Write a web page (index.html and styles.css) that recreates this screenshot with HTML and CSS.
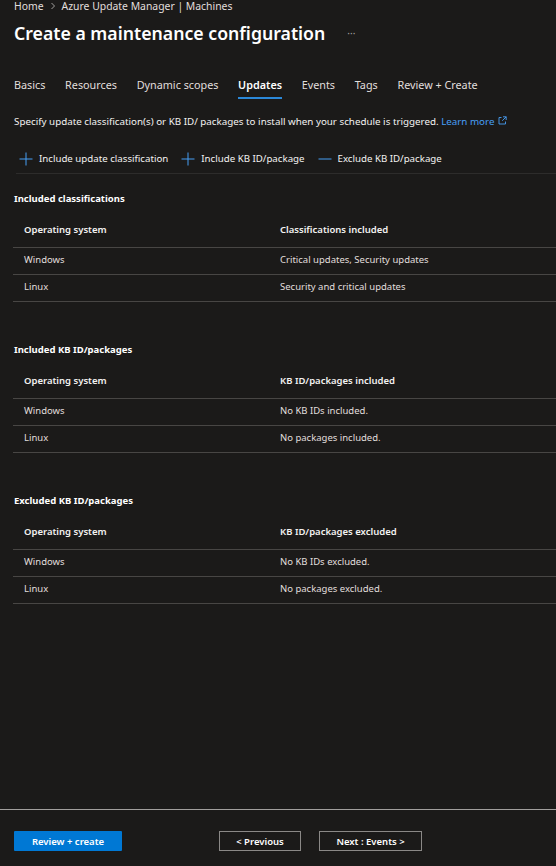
FILE: index.html
```html
<!DOCTYPE html>
<html lang="en">
<head>
<meta charset="utf-8">
<title>Create a maintenance configuration</title>
<link rel="stylesheet" href="styles.css">
</head>
<body>
<div class="page">
  <main class="content">
    <nav class="breadcrumb">
      <span>Home</span>
      <svg class="chev" width="6" height="8" viewBox="0 0 6 8"><path d="M1.5 1 L4.5 4 L1.5 7" fill="none" stroke="#a19f9d" stroke-width="1"/></svg>
      <span>Azure Update Manager | Machines</span>
    </nav>
    <div class="title-row">
      <h1 class="title">Create a maintenance configuration</h1>
      <span class="more">&middot;&middot;&middot;</span>
    </div>

    <div class="tabs">
      <span class="tab">Basics</span>
      <span class="tab">Resources</span>
      <span class="tab">Dynamic scopes</span>
      <span class="tab active">Updates</span>
      <span class="tab">Events</span>
      <span class="tab">Tags</span>
      <span class="tab">Review + Create</span>
    </div>

    <p class="desc">Specify update classification(s) or KB ID/ packages to install when your schedule is triggered. <a class="link">Learn more <svg class="ext" width="9" height="9" viewBox="0 0 9 9"><path d="M3.5 1.5 H1 V8 H7.5 V5.5" fill="none" stroke="#479ef5" stroke-width="0.9"/><path d="M5 0.8 H8.2 V4 M8.2 0.8 L4.2 4.8" fill="none" stroke="#479ef5" stroke-width="0.9"/></svg></a></p>

    <div class="toolbar">
      <span class="tool"><svg class="ticon" width="14" height="14" viewBox="0 0 14 14"><path d="M7 0.5 V13.5 M0.5 7 H13.5" stroke="#479ef5" stroke-width="1"/></svg>Include update classification</span>
      <span class="tool"><svg class="ticon" width="14" height="14" viewBox="0 0 14 14"><path d="M7 0.5 V13.5 M0.5 7 H13.5" stroke="#479ef5" stroke-width="1"/></svg>Include KB ID/package</span>
      <span class="tool"><svg class="ticon" width="14" height="14" viewBox="0 0 14 14"><path d="M0.5 7 H13.5" stroke="#479ef5" stroke-width="1"/></svg>Exclude KB ID/package</span>
    </div>

    <section class="section first">
      <h2 class="heading">Included classifications</h2>
      <div class="table">
        <div class="row head"><span>Operating system</span><span>Classifications included</span></div>
        <div class="row"><span>Windows</span><span>Critical updates, Security updates</span></div>
        <div class="row"><span>Linux</span><span>Security and critical updates</span></div>
      </div>
    </section>

    <section class="section">
      <h2 class="heading">Included KB ID/packages</h2>
      <div class="table">
        <div class="row head"><span>Operating system</span><span>KB ID/packages included</span></div>
        <div class="row"><span>Windows</span><span>No KB IDs included.</span></div>
        <div class="row"><span>Linux</span><span>No packages included.</span></div>
      </div>
    </section>

    <section class="section">
      <h2 class="heading">Excluded KB ID/packages</h2>
      <div class="table">
        <div class="row head"><span>Operating system</span><span>KB ID/packages excluded</span></div>
        <div class="row"><span>Windows</span><span>No KB IDs excluded.</span></div>
        <div class="row"><span>Linux</span><span>No packages excluded.</span></div>
      </div>
    </section>
  </main>

  <footer class="footer">
    <button class="btn primary">Review + create</button>
    <button class="btn outline prev">&lt; Previous</button>
    <button class="btn outline next">Next : Events &gt;</button>
  </footer>
</div>
</body>
</html>
```

FILE: styles.css
```css
* { box-sizing: border-box; }

html, body {
  margin: 0;
  padding: 0;
  background: #1b1a19;
}

body {
  font-family: "Noto Sans", "Open Sans", sans-serif;
  color: #f3f2f1;
  font-size: 10px;
}

.page {
  min-height: 866px;
  display: flex;
  flex-direction: column;
}

.content {
  flex: 1;
  padding-left: 14px;
}

.breadcrumb {
  display: flex;
  align-items: center;
  gap: 5px;
  height: 12px;
  line-height: 12px;
  font-size: 10.4px;
  color: #e1dfdd;
}

.chev { margin: 0 1px; }

.title-row {
  display: flex;
  align-items: center;
  margin-top: 9px;
  height: 24px;
}

.title {
  margin: 0;
  font-size: 17.7px;
  font-weight: 600;
  line-height: 24px;
  color: #ffffff;
}

.more {
  margin-left: 22px;
  color: #a19f9d;
  font-size: 10px;
}

.tabs {
  display: flex;
  margin-top: 32px;
}

.tab {
  font-size: 10.8px;
  line-height: 16px;
  padding-bottom: 4px;
  border-bottom: 2px solid transparent;
  margin-right: 19.7px;
  color: #e1dfdd;
}

.tab.active {
  font-weight: 600;
  color: #ffffff;
  border-bottom-color: #2b88d8;
}

.desc {
  margin: 16px 0 0;
  line-height: 14px;
  font-size: 9.8px;
  color: #f3f2f1;
}

.link {
  color: #479ef5;
}

.ext { vertical-align: 0; margin-left: 1px; }

.toolbar {
  display: flex;
  align-items: center;
  gap: 13px;
  margin: 20px 0 0 2px;
  padding: 0 0 4px 3px;
  height: 25px;
  border-bottom: 1px solid #2d2c2b;
}

.tool {
  display: flex;
  align-items: center;
  gap: 6px;
  font-size: 9.7px;
  line-height: 20px;
  color: #f3f2f1;
}

.ticon { flex: none; }

.section { margin-top: 41px; }
.section.first { margin-top: 18px; }

.heading {
  margin: 0;
  font-size: 9.5px;
  font-weight: 700;
  line-height: 14px;
  color: #ffffff;
}

.table {
  margin-top: 7px;
  margin-left: -1px;
}

.row {
  display: grid;
  grid-template-columns: 256px 1fr;
  padding: 5px 0 7px 11px;
  line-height: 14px;
  font-size: 9.5px;
  border-bottom: 1px solid #484644;
  color: #e1dfdd;
}

.row.head {
  padding: 10px 0 10px 11px;
  font-weight: 600;
  color: #f3f2f1;
}

.footer {
  display: flex;
  align-items: center;
  border-top: 1px solid #a19f9d;
  padding: 21px 0 15px 14px;
}

.btn {
  font-family: inherit;
  font-size: 9.5px;
  font-weight: 600;
  height: 20px;
  padding: 0;
  cursor: pointer;
  color: #ffffff;
}

.primary {
  width: 108px;
  background: #0078d4;
  border: none;
  border-radius: 1px;
}

.outline {
  background: transparent;
  border: 1px solid #8a8886;
}

.prev {
  width: 82px;
  margin-left: 97px;
}

.next {
  width: 103px;
  margin-left: 18px;
}
```
